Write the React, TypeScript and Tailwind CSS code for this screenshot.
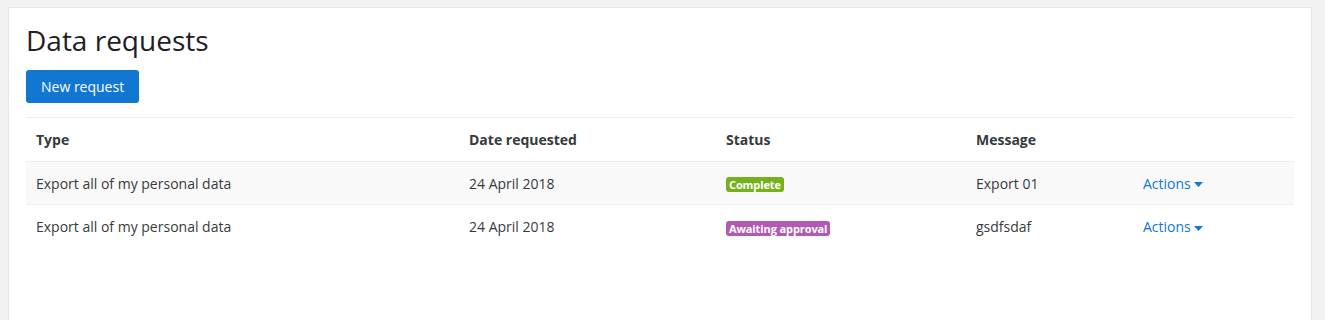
const rows = [
  {
    type: "Export all of my personal data",
    date: "24 April 2018",
    status: "Complete",
    badge: "bg-[#74b11c]",
    message: "Export 01",
  },
  {
    type: "Export all of my personal data",
    date: "24 April 2018",
    status: "Awaiting approval",
    badge: "bg-[#b25ab3]",
    message: "gsdfsdaf",
  },
];

function Caret() {
  return (
    <svg width="9" height="5" viewBox="0 0 9 5" className="ml-[3px] inline-block">
      <path d="M0 0h9L4.5 5z" fill="currentColor" />
    </svg>
  );
}

export default function App() {
  return (
    <div
      className="h-[320px] overflow-hidden bg-[#f2f2f2] pt-[7px] pl-[8px] pr-[13px] text-[#373a3c]"
      style={{ fontFamily: '"Open Sans", "Liberation Sans", sans-serif' }}
    >
      <div className="bg-white border border-[#e6e6e6] h-[330px] px-[17px] pt-[15px]">
        <h2 className="text-[28px] leading-[34px] text-[#1d2125] font-normal">Data requests</h2>
        <button className="mt-[13px] h-[33px] px-[15px] rounded-[3px] bg-[#1177d1] text-white text-[14px]">
          New request
        </button>

        {/* Requests table */}
        <table className="mt-[14px] w-full border-collapse text-[14px]">
          <colgroup>
            <col className="w-[433px]" />
            <col className="w-[257px]" />
            <col className="w-[250px]" />
            <col className="w-[167px]" />
            <col />
          </colgroup>
          <thead>
            <tr className="h-[44px] border-t border-[#eceeef] text-left">
              <th className="pl-[10px] font-bold">Type</th>
              <th className="pl-[10px] font-bold">Date requested</th>
              <th className="pl-[10px] font-bold">Status</th>
              <th className="pl-[10px] font-bold">Message</th>
              <th />
            </tr>
          </thead>
          <tbody>
            {rows.map((r, i) => (
              <tr
                key={i}
                className={`h-[43px] border-t border-[#eceeef] ${i % 2 === 0 ? "bg-[#f9f9f9]" : "bg-white"}`}
              >
                <td className="pl-[10px]">{r.type}</td>
                <td className="pl-[10px]">{r.date}</td>
                <td className="pl-[10px]">
                  <span
                    className={`${r.badge} inline-block rounded-[3px] px-[3px] text-[11px] leading-[15px] font-bold tracking-[-0.1px] text-white align-middle`}
                  >
                    {r.status}
                  </span>
                </td>
                <td className="pl-[10px]">{r.message}</td>
                <td className="pl-[10px] text-[#1177d1]">
                  Actions
                  <Caret />
                </td>
              </tr>
            ))}
          </tbody>
        </table>
      </div>
    </div>
  );
}
